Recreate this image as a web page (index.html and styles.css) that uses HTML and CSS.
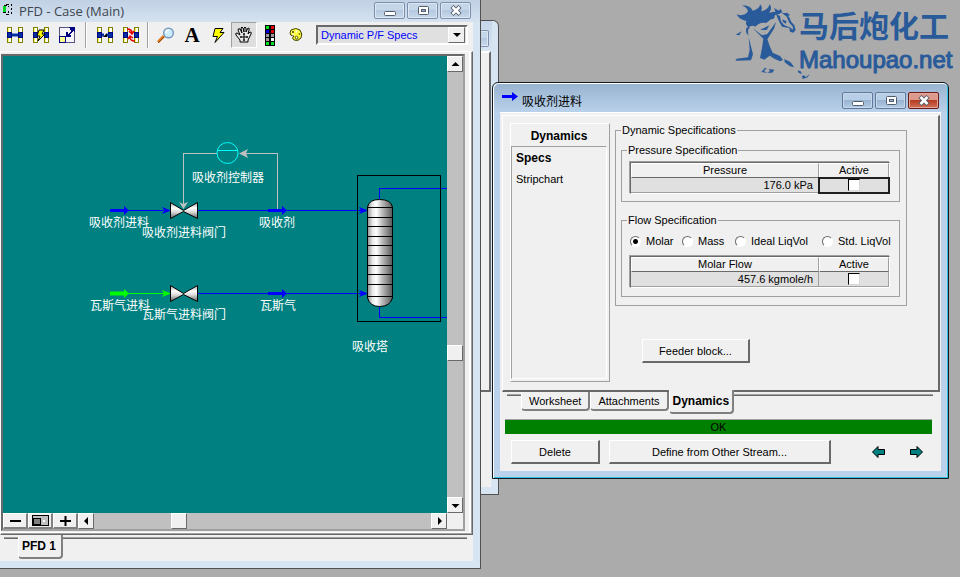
FILE: index.html
```html
<!DOCTYPE html>
<html lang="zh-CN">
<head>
<meta charset="utf-8">
<title>PFD - Case (Main)</title>
<link rel="stylesheet" href="styles.css">
</head>
<body>
<svg class="defs" aria-hidden="true">
  <defs>
    <g id="col" shape-rendering="crispEdges">
      <rect width="5" height="16" fill="#808000"/>
      <rect x="1" y="1" width="3" height="14" fill="#ffff60"/>
      <rect x="2" y="1" width="2" height="14" fill="#fff"/>
      <rect y="5" width="5" height="6" fill="#000080"/>
      <rect x="1" y="6" width="3" height="4" fill="#0030a0"/>
    </g>
    <path id="bolt" d="M3 .5 L11 .5 L8 4.500 L12 4.500 L3 14.500 L5.500 8.500 L1 8.500 Z" fill="#ff0" stroke="#000"/>
    <linearGradient id="steel">
      <stop offset="0" stop-color="#909090"/><stop offset=".2" stop-color="#e8e8e8"/><stop offset=".35" stop-color="#fff"/>
      <stop offset=".6" stop-color="#b8b8b8"/><stop offset="1" stop-color="#585858"/>
    </linearGradient>
    <linearGradient id="valve" x2="0" y2="1">
      <stop offset="0" stop-color="#a0a0a0"/><stop offset=".35" stop-color="#fff"/><stop offset=".6" stop-color="#d8d8d8"/><stop offset="1" stop-color="#606060"/>
    </linearGradient>
    <g id="minglyph"><rect x=".5" y="7.500" width="11" height="4" rx="1" fill="#fff" stroke="#525c6c"/></g>
    <g id="maxglyph"><rect x="1.500" y="2.500" width="10" height="8" rx="1" fill="#fff" stroke="#525c6c"/><rect x="4.500" y="5.500" width="4" height="2" fill="#9fb6d0" stroke="#525c6c"/></g>
    <g id="closeglyph"><path d="M2 2.500 L10 10.500 M10 2.500 L2 10.500" stroke="#525c6c" stroke-width="4.500"/><path d="M2.500 3 L9.500 10 M9.500 3 L2.500 10" stroke="#fff" stroke-width="2.500"/></g>
  </defs>
</svg>

<main class="desktop">
  <div class="logo">
    <svg width="82" height="84" viewBox="0 0 246 252" fill="#295a99" aria-hidden="true">
      <path d="M20 43 C34 48 46 46 54 34 C52 24 46 20 36 17 C52 14 64 22 68 32 C80 30 90 22 90 13 C97 20 96 27 94 34 C106 32 116 24 119 13 C126 22 123 31 117 38 C126 38 132 34 137 36 L132 24 L147 32 L151 26 L157 36 L148 42 L138 44 C130 46 138 52 128 58 C122 54 118 64 108 69 C94 66 82 72 76 80 C68 74 60 78 55 83 C52 76 44 74 50 63 C40 62 26 56 20 43 Z"/>
      <path d="M138 42 L146 62 L156 80 L178 84 L180 95 L190 98 L197 90 L193 76 L184 66 L178 52 L166 40 L155 38 L170 50 L178 68 L189 81 L188 90 L182 83 L162 75 L153 64 L150 48 Z"/>
      <path d="M156 58 L170 64 L167 71 L160 67 Z M161 40 L171 38 L180 45 L174 48 Z"/>
      <path d="M90 90 L118 76 L110 90 Z"/>
      <path d="M68 84 L96 106 L112 102 L138 66 L132 86 L112 118 L120 140 L128 158 L150 168 L159 180 L150 184 L133 176 L119 167 L103 179 L90 174 L96 144 L100 116 Z"/>
      <path d="M17 104 L35 94 L28 106 Z M49 83 L60 80 L54 91 L55 108 L48 96 Z M56 112 L69 163 L63 181 L16 182 L20 176 L54 172 L59 150 Z"/>
      <path d="M163 177 L181 186 L193 202 L180 199 L164 187 Z"/>
      <path d="M94 216 L105 203 L110 205 L102 213 L112 219 Z M116 207 L133 209 L127 218 L112 218 L120 213 Z M203 211 L212 214 L216 222 L206 219 Z M215 229 L222 226 L228 232 L239 221 L233 232 L219 237 Z"/>
    </svg>
    <div class="logo-text"><span class="logo-cn">马后炮化工</span><span class="logo-en">Mahoupao.net</span></div>
  </div>

  <section class="window back" aria-hidden="true">
    <div class="back-title"><span class="capbtn"></span></div>
    <div class="back-panel"></div>
    <div class="back-foot"></div>
  </section>

  <section class="window main">
    <header class="titlebar">
      <svg class="appicon" width="14" height="14" viewBox="0 0 14 14" shape-rendering="crispEdges" aria-hidden="true">
        <path d="M1 4 L4 3 V11 L1 10 Z" fill="#00d820"/><path d="M2 3 H5 M4 2 H7 M4 12 H7 M1 10 H4 M9 2 V4 M9 6 V8 M9 10 V12 M6 4 H7 M6 9 V11" stroke="#000" fill="none"/>
      </svg>
      <h1>PFD - Case (Main)</h1>
      <button class="capbtn" aria-label="Minimize"><svg width="12" height="13"><use href="#minglyph"/></svg></button>
      <button class="capbtn" aria-label="Maximize"><svg width="12" height="13"><use href="#maxglyph"/></svg></button>
      <button class="capbtn" aria-label="Close"><svg width="12" height="13"><use href="#closeglyph"/></svg></button>
    </header>

    <div class="client">
      <div class="toolbar">
        <button class="tool" aria-label="Attach mode"><svg width="16" height="16"><use href="#col"/><use href="#col" x="11"/><path d="M5 8H11" stroke="#0030a0" stroke-width="3"/></svg></button>
        <button class="tool" aria-label="Auto attach"><svg width="16" height="16"><use href="#col"/><use href="#col" x="11"/><path d="M6 3 H11 L9 7 H12 L5 14 L7 9 H4 Z" fill="#ff0" stroke="#000"/></svg></button>
        <button class="tool" aria-label="Size mode"><svg width="16" height="16" shape-rendering="crispEdges"><path d="M.5 9V.5H15.500V15.500H7" fill="#f4f4fa" stroke="#555580"/><rect x=".5" y="9.500" width="6" height="6" fill="#ffff90" stroke="#000080"/><path d="M10 0H16V6L14 4L10 8L12 8V10H7V5H9V7L12 4Z" fill="#000080"/></svg></button>
        <span class="sep"></span>
        <button class="tool" aria-label="Break connection"><svg width="16" height="16"><use href="#col"/><use href="#col" x="11"/><path d="M5 8H7M10 8H12" stroke="#0030a0" stroke-width="3"/><path d="M6 10L10 6V10Z" fill="#000"/></svg></button>
        <button class="tool" aria-label="Swap connections"><svg width="16" height="16"><use href="#col"/><use href="#col" x="11"/><path d="M6 5h5v6h-6z" fill="#f0f0f0"/><path d="M4 2 Q9 2 9 6 M6 4L9 7L11 4 M12 14Q7 14 7 10 M5 12L7 9L10 11" fill="none" stroke="#e00000" stroke-width="1.500"/></svg></button>
        <span class="sep"></span>
        <button class="tool" aria-label="Zoom"><svg width="18" height="17"><path d="M1 15L7 9" stroke="#e07818" stroke-width="3"/><path d="M1 16L7 10" stroke="#805020"/><circle cx="11.500" cy="6" r="4.800" fill="#cceefc" stroke="#7898c0" stroke-width="1.500"/><path d="M9 6Q9 3 12 3" fill="none" stroke="#fff" stroke-width="1.500"/></svg></button>
        <button class="tool letter" aria-label="Add text">A</button>
        <button class="tool" aria-label="Quick route"><svg width="13" height="15"><use href="#bolt"/></svg></button>
        <button class="tool pressed" aria-label="Drag"><svg width="18" height="18" viewBox="0 0 18 18"><path d="M5 14L1 9Q0 7 2 7L5 9L3 4Q3 2 5 3L7 7L6 2Q7 0 8 2L9 6V2Q10 0 11 2V6L13 2Q15 2 14 4L13 8L15 6Q17 6 16 8L13 14V16H5Z" fill="#e8e8e8" stroke="#000"/><path d="M9 7V15M5 11H13M8 8H10M8 14H10M6 10V12M12 10V12" stroke="#000"/></svg></button>
        <button class="tool" aria-label="Status lights"><svg width="10" height="21" shape-rendering="crispEdges"><rect width="10" height="21" fill="#000"/><path d="M1 1h3v3h-3zM1 17h3v3h-3zM6 17h3v3h-3z" fill="#00e020"/><path d="M6 1h3v3h-3zM6 5h3v3h-3z" fill="#e00000"/><path d="M1 5h3v3h-3z" fill="#0000e0"/><path d="M1 9h3v3h-3zM6 9h3v3h-3zM1 13h3v3h-3z" fill="#999"/><path d="M6 13h3v3h-3z" fill="#fff"/></svg></button>
        <button class="tool" aria-label="Colour scheme"><svg width="14" height="14"><path d="M2 2Q7-1 11 2Q14 6 12 10Q9 14 5 12Q2 10 5 8Q1 8 1 5Z" fill="#ffff40" stroke="#404000"/><path d="M6 9Q9 7 9 10Q9 12 7 11Z" fill="#fff" stroke="#606000"/><circle cx="4" cy="4" r="1" fill="#404000"/><circle cx="7.500" cy="3.500" r="1" fill="#fff"/><circle cx="10.500" cy="6" r="1" fill="#808000"/><circle cx="4" cy="6.500" r="1" fill="#fff"/></svg></button>
        <span class="combo">
          <select aria-label="Colour scheme"><option>Dynamic P/F Specs</option></select>
          <svg class="combo-arrow" width="17" height="15" aria-hidden="true"><path d="M4 5H12L8 9Z"/></svg>
        </span>
      </div>

      <div class="pageframe">
        <div class="sheet">
          <div class="canvas">
            <svg width="444" height="457" viewBox="3 56 444 457" role="img" aria-label="Process flow diagram">
              <g fill="none" shape-rendering="crispEdges">
                <path d="M183.500 204V153.500H217M277.500 210V153.500H243" stroke="#c0c0c0"/>
                <path d="M110 210.500H163M198 210.500H363M198 293.500H363M379.500 199V188.500H447M379.500 306V317.500H447" stroke="#00f"/>
                <path d="M110 293.500H166" stroke="#0f0"/>
                <rect x="357.500" y="175.500" width="83" height="146" stroke="#000"/>
              </g>
              <circle cx="227.500" cy="153" r="10.500" fill="none" stroke="#0ff"/>
              <path d="M217 150.500H238" stroke="#0ff"/>
              <path d="M239 153.500L248 149L246 153L248 158Z M183.500 209L179 202L183 204L188 202Z" fill="#c0c0c0"/>
              <g fill="#00f">
                <path d="M110 209H124V206L129 210.500L124 215V212H110Z"/>
                <path d="M268 209H282V206L287 210.500L282 215V212H268Z"/>
                <path d="M268 292H282V289L287 293.500L282 298V295H268Z"/>
                <path d="M162 207L171 210.500L162 214L164 210.500Z M359 207L368 210.500L359 214L361 210.500Z M359 290L368 293.500L359 297L361 293.500Z"/>
              </g>
              <g fill="#0f0"><path d="M110 291.500H124V289L129 293.500L124 298V295.500H110Z M162 290L171 293.500L162 297L164 293.500Z"/></g>
              <g fill="url(#valve)" stroke="#000">
                <path d="M170.500 202.500L183.500 210.500L197.500 202.500V218.500L183.500 211.500L170.500 218.500Z"/>
                <path d="M170.500 285.500L183.500 293.500L197.500 285.500V301.500L183.500 294.500L170.500 301.500Z"/>
              </g>
              <path d="M367.500 207Q369 199.500 379.500 199.500Q391 199.500 392.500 207V298Q390 306.500 379.500 306.500Q370 306.500 367.500 298Z" fill="url(#steel)" stroke="#000"/>
              <path d="M368 207.500H392M368 217.500H392M368 226.500H392M368 236.500H392M368 245.500H392M368 255.500H392M368 265.500H392M368 274.500H392M368 284.500H392M368 296.500H392" stroke="#000" shape-rendering="crispEdges"/>
              <g class="labels">
                <text x="192" y="182">吸收剂控制器</text>
                <text x="89" y="227">吸收剂进料</text>
                <text x="142" y="237">吸收剂进料阀门</text>
                <text x="259" y="227">吸收剂</text>
                <text x="90" y="310">瓦斯气进料</text>
                <text x="142" y="319">瓦斯气进料阀门</text>
                <text x="260" y="310">瓦斯气</text>
                <text x="352" y="351">吸收塔</text>
              </g>
            </svg>
          </div>
          <div class="vscroll">
            <button aria-label="Scroll up"><svg width="9" height="5"><path d="M4.500 0L8.500 4H.5Z"/></svg></button>
            <span class="track before"></span><span class="thumb"></span><span class="track after"></span>
            <button aria-label="Scroll down"><svg width="9" height="5"><path d="M.5 1H8.500L4.500 5Z"/></svg></button>
          </div>
          <div class="hscroll">
            <button class="wide" aria-label="Zoom out"><svg width="11" height="10"><path d="M0 5H11" stroke="#000" stroke-width="2"/></svg></button>
            <button class="wide" aria-label="Zoom all"><svg width="17" height="11" shape-rendering="crispEdges"><rect x=".5" y=".5" width="16" height="10" fill="#c0c0c0" stroke="#000"/><rect x="1.500" y="3.500" width="7" height="6" fill="#808080" stroke="#000"/><rect x="11" y="5" width="2" height="2" fill="#fff"/></svg></button>
            <button class="wide" aria-label="Zoom in"><svg width="11" height="10"><path d="M0 5H11M5.500 0V10" stroke="#000" stroke-width="2"/></svg></button>
            <button aria-label="Scroll left"><svg width="5" height="8"><path d="M4 0V8L0 4Z"/></svg></button>
            <span class="track before"></span><span class="thumb"></span><span class="track after"></span>
            <button aria-label="Scroll right"><svg width="5" height="8"><path d="M1 0V8L5 4Z"/></svg></button>
          </div>
          <span class="corner"></span>
        </div>
      </div>
      <div class="tabs main-tabs">
        <span class="shelf first"></span>
        <button class="tab active">PFD 1</button>
        <span class="shelf"></span>
      </div>
    </div>
  </section>

  <section class="window dialog">
    <header class="titlebar">
      <svg class="arrowicon" width="17" height="10" viewBox="0 0 17 10" aria-hidden="true"><path d="M1 4H11V1L17 5.500L11 10V7H1Z" fill="#00f"/></svg>
      <h2>吸收剂进料</h2>
      <button class="capbtn" aria-label="Minimize"><svg width="12" height="13"><use href="#minglyph"/></svg></button>
      <button class="capbtn" aria-label="Maximize"><svg width="12" height="13"><use href="#maxglyph"/></svg></button>
      <button class="capbtn close" aria-label="Close"><svg width="12" height="13"><use href="#closeglyph"/></svg></button>
    </header>
    <div class="client">
      <div class="panel">
        <nav class="side">
          <h3>Dynamics</h3>
          <ul><li><a class="current" href="#specs">Specs</a></li><li><a href="#stripchart">Stripchart</a></li></ul>
        </nav>
        <div class="specs" id="specs">
          <fieldset class="outer">
            <legend>Dynamic Specifications</legend>
            <fieldset>
              <legend>Pressure Specification</legend>
              <table>
                <colgroup><col><col class="active-col"></colgroup>
                <thead><tr><th>Pressure</th><th>Active</th></tr></thead>
                <tbody><tr><td>176.0 kPa</td><td class="focus"><input type="checkbox" aria-label="Pressure active"></td></tr></tbody>
              </table>
            </fieldset>
            <fieldset class="flow">
              <legend>Flow Specification</legend>
              <div class="radios">
                <label><input type="radio" name="basis" checked>Molar</label>
                <label><input type="radio" name="basis">Mass</label>
                <label><input type="radio" name="basis">Ideal LiqVol</label>
                <label><input type="radio" name="basis">Std. LiqVol</label>
              </div>
              <table>
                <colgroup><col><col class="active-col"></colgroup>
                <thead><tr><th>Molar Flow</th><th>Active</th></tr></thead>
                <tbody><tr><td>457.6 kgmole/h</td><td><input type="checkbox" aria-label="Flow active"></td></tr></tbody>
              </table>
            </fieldset>
          </fieldset>
          <button class="btn feeder">Feeder block...</button>
        </div>
      </div>
      <div class="tabs">
        <span class="shelf first"></span>
        <button class="tab">Worksheet</button>
        <button class="tab">Attachments</button>
        <button class="tab active">Dynamics</button>
        <span class="shelf"></span>
      </div>
      <div class="status">OK</div>
      <div class="actions">
        <button class="btn delete">Delete</button>
        <button class="btn define">Define from Other Stream...</button>
        <button class="step" aria-label="Previous stream"><svg width="13" height="12"><path d="M.5 6L6 .5V3.500H12.500V8.500H6V11.500Z" fill="#008080" stroke="#000"/></svg></button>
        <button class="step" aria-label="Next stream"><svg width="13" height="12"><path d="M12.500 6L7 .5V3.500H.5V8.500H7V11.500Z" fill="#008080" stroke="#000"/></svg></button>
      </div>
    </div>
  </section>
</main>
</body>
</html>
```
FILE: styles.css
```css
:root {
  --face: #f0f0f0;
  --mid: #a0a0a0;
  --dark: #696969;
  --teal: #008080;
}
* { box-sizing: border-box; }
body {
  margin: 0;
  background: #ababab;
  color: #000;
  font: 11px/14px "Liberation Sans", "Noto Sans CJK SC", sans-serif;
}
button, select, input { font: inherit; color: inherit; margin: 0; padding: 0; border: 0; border-radius: 0; }
h1, h2, h3, ul { margin: 0; padding: 0; font: inherit; list-style: none; }
a { color: inherit; text-decoration: none; }
svg { display: block; }
.defs { position: absolute; width: 0; height: 0; }
.desktop { position: relative; height: 100vh; overflow: hidden; }

/* Logo */
.logo { position: absolute; top: 0; right: 0; display: flex; width: 230px; color: #295a99; }
.logo svg { flex: none; }
.logo-text { display: flex; flex-direction: column; margin-left: -13px; padding-top: 8px; white-space: nowrap; }
.logo-cn { font: 700 30px/32px "Noto Sans CJK SC", sans-serif; }
.logo-en { margin-top: 4px; font: 24px/32px "Liberation Sans", sans-serif; -webkit-text-stroke: 1px #295a99; }

/* Windows */
.window { position: absolute; display: flex; flex-direction: column; }
.client { display: flex; flex-direction: column; background: var(--face); }
.titlebar { display: flex; align-items: flex-start; gap: 2px; }
.titlebar h1, .titlebar h2 { flex: 1; }
.capbtn {
  display: grid; place-items: center; width: 31px; height: 17px;
  border: 1px solid #7d8fac; border-radius: 2px;
  background: linear-gradient(#c6d6e9 45%, #b4c8df 50%, #c9d9eb);
  box-shadow: inset 0 0 0 1px #dce7f3;
}
.capbtn svg { height: 13px; }

.main { left: 0; top: 0; width: calc(50% + 1px); bottom: 8px; background: #d7e4f2; border-right: 1px solid #505050; border-bottom: 1px solid #505050; }
.main .titlebar { height: 22px; padding: 2px 9px 0 2px; background: linear-gradient(#c0d1e4, #d5e2f0); }
.main h1 { margin-left: 1px; font: 13px/18px "Open Sans", "Noto Sans", sans-serif; color: #3c4650; }
.main .client { flex: 1; margin: 0 7px 7px 0; min-height: 0; }

.back { left: 50%; top: 20px; width: 19px; height: 475px; border: 1px solid #505050; border-left: 0; border-radius: 0 6px 0 0; background: #d7e4f2; padding-right: 7px; overflow: hidden; }
.back-title { height: 30px; padding-top: 9px; background: linear-gradient(#c6d6e8, #d7e4f2); margin-right: -1px; }
.back-title .capbtn { width: 9px; border-left: 0; border-radius: 0 2px 2px 0; }
.back-panel { height: 341px; background: var(--face); border-top: 2px solid #fff; border-right: 2px solid var(--dark); border-bottom: 2px solid var(--dark); }
.back-foot { flex: 1; margin-bottom: 7px; background: var(--face); }

/* Toolbar */
.toolbar { display: flex; align-items: center; height: 29px; padding: 0 5px 3px 2px; }
.tool { display: grid; place-items: center; flex: none; width: 26px; height: 26px; background: none; }
.tool.pressed { background: #dedede; border: 1px solid; border-color: var(--mid) #fff #fff var(--mid); }
.tool.letter { font: bold 21px/26px "Liberation Serif", serif; }
.sep { width: 2px; height: 26px; margin: 0 5px; border-left: 1px solid var(--mid); border-right: 1px solid #fff; }
.sep ~ .sep { margin: 0 4px 0 3px; }
.combo { flex: 1; display: grid; grid-template-columns: 1fr 18px; height: 20px; margin-left: 7px; border: 2px solid; border-color: var(--dark) #fff #fff var(--dark); background: #e0e0e0; }
.combo select { grid-area: 1 / 1 / 2 / 3; appearance: none; width: 100%; padding-left: 3px; background: none; color: #00f; }
.combo-arrow { grid-area: 1 / 2; border: 1px solid; border-color: #fff var(--dark) var(--dark) #fff; background: var(--face); pointer-events: none; width: 17px; height: 16px; }

/* Flowsheet page */
.pageframe { flex: 1; display: flex; min-height: 0; padding: 2px 7px 3px 0; border: 1px solid; border-color: #fff var(--dark) var(--dark) #fff; box-shadow: inset -1px -1px var(--mid), inset -3px -2px #fff; }
.sheet {
  flex: 1; display: grid; grid-template: 1fr 16px / 1fr 16px; min-width: 0;
  border: 2px solid; border-color: var(--dark) var(--mid) var(--mid) var(--dark);
}
.canvas { overflow: hidden; min-width: 0; min-height: 0; background: var(--teal); }
.labels { fill: #fff; font: 12px "Noto Sans CJK SC", sans-serif; }
.vscroll, .hscroll { display: flex; background: #c0c0c0; }
.vscroll { flex-direction: column; }
.vscroll button, .hscroll button, .thumb, .corner { display: grid; place-items: center; flex: none; width: 16px; height: 16px; background: var(--face); border: 1px solid; border-color: #fff var(--dark) var(--dark) #fff; }
.hscroll .wide { width: 25px; border-width: 1px 2px 2px 1px; border-color: #fff #808080 #808080 #fff; }
.corner { border: 0; }
.vscroll .before { flex: 273; } .vscroll .after { flex: 136; }
.hscroll .before { flex: 77; } .hscroll .after { flex: 244; }

/* Tabs */
.tabs { display: flex; align-items: flex-start; }
.shelf { flex: 1; height: 3px; border-bottom: 1px solid var(--mid); box-shadow: 0 1px var(--dark); }
.tab { height: 19px; padding: 0 7px; background: var(--face); border: solid; border-width: 0 2px 2px 1px; border-color: #fff #808080 #808080 #fff; border-radius: 0 0 4px 4px; white-space: nowrap; }
.tab.active { height: 24px; margin-top: -2px; padding: 0 3px; font-weight: bold; font-size: 12px; }
.main-tabs { height: 26px; padding-right: 6px; }
.main-tabs .first { flex: none; width: 14px; margin-left: 4px; }
.main-tabs .tab.active { margin-top: 0; padding: 0 5px 0 3px; }

/* Stream dialog */
.dialog { left: calc(50% + 12px); right: 11px; top: 82px; border: 1px solid #101820; border-radius: 6px 6px 0 0; background: #b9d1ea; box-shadow: inset 1px 1px #fff, inset -1px -1px #30c0e0; padding: 0 7px 7px; }
.dialog .titlebar { height: 28px; margin: 1px -6px 0; padding: 8px 8px 0 7px; background: linear-gradient(#99b4d1, #b9d1ea); border-radius: 5px 5px 0 0; }
.dialog h2 { margin-left: 2px; font: 12px/17px "Noto Sans CJK SC", sans-serif; }
.arrowicon { margin-top: -1px; }
.dialog .capbtn { background: linear-gradient(#b8cee6 45%, #98b3d1 50%, #b4cce6); border-color: #64799a; box-shadow: inset 0 0 0 1px #c6d8eb; }
.dialog .close { background: linear-gradient(#dc9a8c 45%, #b83c22 50%, #d07058); border-color: #701818; box-shadow: inset 0 0 0 1px #e0a898; }
.dialog > .client { padding: 2px 1px 7px 2px; border-top: 1px solid #fff; }
.panel { display: flex; align-items: flex-start; gap: 5px; padding: 7px 31px 8px 7px; border: solid; border-width: 1px 2px 2px 1px; border-color: #fff var(--dark) var(--dark) #fff; }
.side { flex: none; align-self: stretch; width: 100px; min-height: 259px; border: 1px solid; border-color: #fff var(--mid) var(--mid) #fff; padding: 0 2px 2px 0; display: flex; flex-direction: column; }
.side h3 { height: 22px; font-weight: bold; font-size: 12px; line-height: 25px; text-align: center; }
.side ul { flex: 1; display: flex; flex-direction: column; gap: 7px; padding: 4px; border: 1px solid; border-color: var(--mid) #fff #fff var(--mid); }
.side li { height: 14px; }
.side .current { font-weight: bold; font-size: 12px; }
.specs { flex: 1; min-width: 0; }
fieldset { min-width: 0; margin: 0; padding: 5px 9px 7px 8px; border: 1px solid var(--mid); }
fieldset.outer { padding: 6px 6px 8px 5px; }
legend { height: 14px; margin-left: -3px; padding: 0 1px; }
.outer > legend { margin-left: 0; }
.flow { margin-top: 11px; padding: 7px 9px 8px 8px; }
.radios { display: grid; grid-template-columns: 52px 53px 87px auto; margin-bottom: 8px; height: 14px; white-space: nowrap; }
.radios label { display: flex; align-items: center; gap: 5px; }
input[type="radio"] { appearance: none; flex: none; width: 11px; height: 11px; border: 1px solid; border-color: #696969 #fff #fff #696969; border-radius: 50%; background: #fff; }
input[type="radio"]:checked { background: radial-gradient(#000 0 2px, #fff 3px); }
input[type="checkbox"] { appearance: none; display: block; width: 12px; height: 12px; margin: 0 auto; border: 1px solid; border-color: #000 #d8d8d8 #d8d8d8 #000; background: #fff; }
table { width: 100%; table-layout: fixed; border-collapse: separate; border-spacing: 0; border: 1px solid; border-color: var(--dark) #fff #fff var(--dark); box-shadow: -1px -1px var(--mid); }
.active-col { width: 70px; }
th { height: 15px; padding: 0; font-weight: normal; line-height: 13px; border: 1px solid; border-color: #fff var(--mid) var(--dark) #fff; }
td { height: 15px; padding: 0 5px 0 0; line-height: 13px; text-align: right; background: #e0e0e0; border-right: 1px solid var(--mid); border-bottom: 1px solid var(--mid); }
td + td { padding: 0; }
td.focus { outline: 2px solid #202020; outline-offset: -1px; }
.btn { height: 24px; background: var(--face); border: solid; border-width: 1px 2px 2px 1px; border-color: #fff var(--dark) var(--dark) #fff; white-space: nowrap; }
.feeder { display: block; width: 108px; margin: 33px 0 0 27px; }
.dialog .tabs { height: 27px; padding: 0 7px 0 5px; }
.dialog .tabs .first { flex: none; width: 14px; }
.status { margin: 0 8px 0 3px; height: 15px; background: #008000; border-top: 1px solid var(--mid); text-align: center; }
.actions { display: flex; align-items: center; margin: 6px 8px 0 9px; }
.delete { width: 89px; margin-right: 9px; }
.define { flex: 1; margin-right: 31px; }
.step { display: grid; place-items: center; width: 32px; height: 24px; background: none; }
.step + .step { margin-left: 6px; }
```
